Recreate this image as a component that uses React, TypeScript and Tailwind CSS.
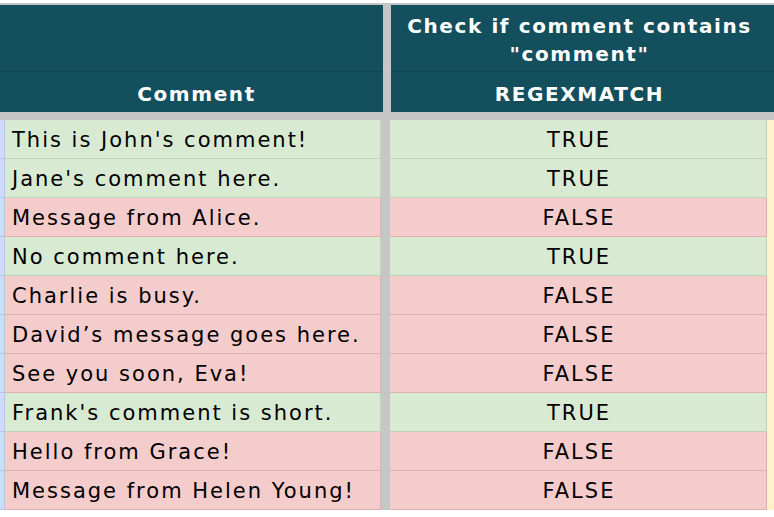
const rows: { text: string; match: boolean }[] = [
  { text: "This is John's comment!", match: true },
  { text: "Jane's comment here.", match: true },
  { text: "Message from Alice.", match: false },
  { text: "No comment here.", match: true },
  { text: "Charlie is busy.", match: false },
  { text: "David’s message goes here.", match: false },
  { text: "See you soon, Eva!", match: false },
  { text: "Frank's comment is short.", match: true },
  { text: "Hello from Grace!", match: false },
  { text: "Message from Helen Young!", match: false },
];

export default function App() {
  return (
    <div className="h-[517px] w-[774px] overflow-hidden bg-white font-['DejaVu_Sans',sans-serif] text-black">
      <div className="h-[3px]" />
      <div className="h-[2px] bg-[#c6c6c6]" />

      {/* header */}
      <div className="flex h-[107px] tracking-[1.6px] text-white">
        <div className="flex w-[383px] flex-col bg-[#134f5c]">
          <div className="h-[67px] border-b border-[#0f4350]" />
          <div className="flex flex-1 items-center justify-center pt-[3px] pl-[10px] text-[20px] font-bold">
            Comment
          </div>
        </div>
        <div className="w-[8px] bg-[#c6c6c6]" />
        <div className="flex flex-1 flex-col bg-[#134f5c]">
          <div className="flex h-[67px] flex-col items-center justify-center border-b border-[#0f4350] pt-[3px] pr-[6px] text-[20px] font-bold leading-[28px]">
            <span>Check if comment contains</span>
            <span>"comment"</span>
          </div>
          <div className="flex flex-1 items-center justify-center pt-[3px] pr-[6px] text-[20px] font-bold">
            REGEXMATCH
          </div>
        </div>
      </div>

      <div className="h-[8px] bg-[#c6c6c6]" />

      {/* rows */}
      <div className="flex flex-col">
        {rows.map((r, i) => {
          const bg = r.match ? "bg-[#d9ead3]" : "bg-[#f4cccc]";
          const bd = r.match ? "border-[#bdd4b6]" : "border-[#dcb0b0]";
          return (
            <div key={i} className="flex h-[39px] text-[21px] leading-[24px] tracking-[2px]">
              <div className="w-[5px] border-r border-b border-[#b7c5e4] bg-[#cfdcf8]" />
              <div className={`flex w-[376px] items-end border-r border-b pb-[6px] pl-[7px] ${bg} ${bd}`}>
                {r.text}
              </div>
              <div className="w-[9px] bg-[#c6c6c6]" />
              <div className={`flex w-[377px] items-end justify-center border-r border-b pb-[6px] pl-[2px] ${bg} ${bd}`}>
                {r.match ? "TRUE" : "FALSE"}
              </div>
              <div className="flex-1 bg-[#fff2cc]" />
            </div>
          );
        })}
      </div>
    </div>
  );
}
